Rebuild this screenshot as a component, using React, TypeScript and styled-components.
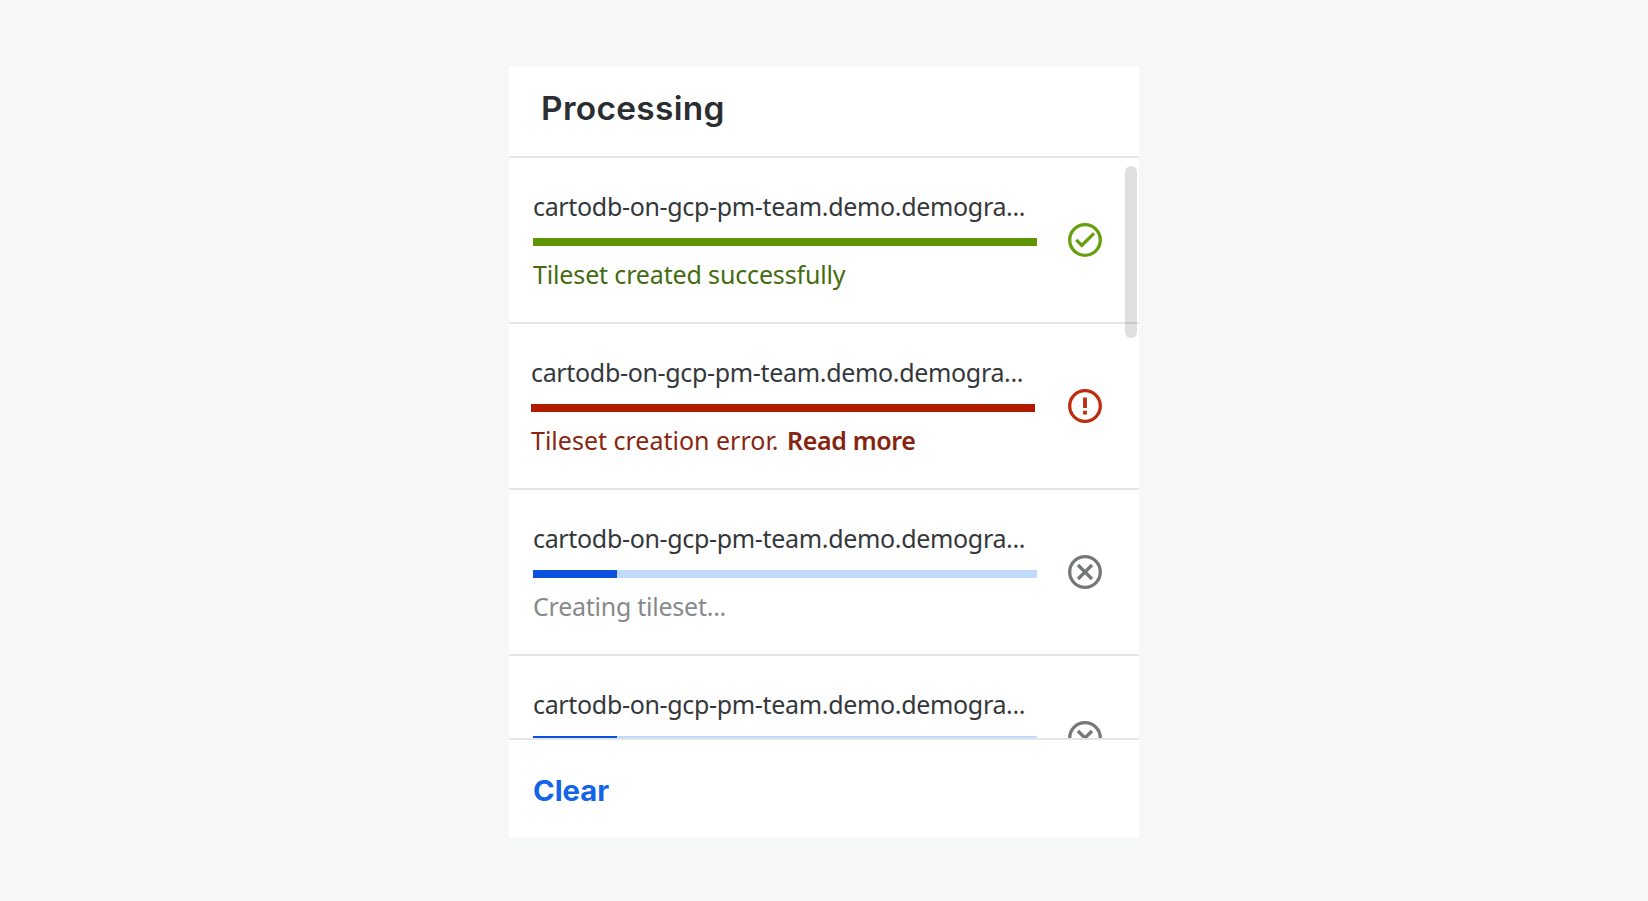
import React from "react";
import styled, { createGlobalStyle } from "styled-components";

const GlobalStyle = createGlobalStyle`
  *, *::before, *::after { box-sizing: border-box; }
  body { margin: 0; background: #f5f8f7; }
`;

type Status = "success" | "error" | "running";

const palette = {
  success: { bar: "#5f9404", track: "#5f9404", text: "#456b10", icon: "#669f0e" },
  error: { bar: "#b21a02", track: "#b21a02", text: "#882612", icon: "#be2d10" },
  running: { bar: "#0b51df", track: "#bfdafa", text: "#878a8b", icon: "#747879" },
};

const messageSpacing = { success: "-0.15px", error: "0", running: "-0.25px" };

const Page = styled.main`
  display: flex;
  justify-content: center;
  align-items: flex-start;
  height: 901px;
  padding-top: 66px;
  overflow: hidden;
`;

const Card = styled.section`
  display: flex;
  flex-direction: column;
  width: 630px;
  height: 772px;
  background: #fff;
`;

const Header = styled.header`
  flex: none;
  height: 92px;
  padding: 23px 32px 0;
  border-bottom: 2px solid #e4e6e6;
`;

const Title = styled.h1`
  width: max-content;
  margin: 0;
  color: #2a2e31;
  font: 600 32px/40px Inter, sans-serif;
  letter-spacing: 0.3px;
  transform: scaleX(1.045);
  transform-origin: left;
`;

const Viewport = styled.div`
  position: relative;
  flex: none;
  height: 580px;
  overflow: hidden;
`;

const Row = styled.article<{ $shift: number }>`
  display: flex;
  justify-content: space-between;
  height: 166px;
  padding: 30px 36px 0 ${(p) => 24 - p.$shift}px;
  border-bottom: 2px solid #e4e6e6;
`;

const Details = styled.div`
  display: flex;
  flex-direction: column;
  width: 504px;
`;

const Name = styled.div`
  width: max-content;
  height: 36px;
  color: #34383b;
  font: 400 25px/36px "Noto Sans", sans-serif;
  letter-spacing: -0.33px;
  white-space: nowrap;
`;

const Track = styled.div<{ $status: Status }>`
  height: 8px;
  margin-top: 14px;
  background: ${(p) => palette[p.$status].track};
`;

const Fill = styled.div<{ $status: Status }>`
  height: 100%;
  background: ${(p) => palette[p.$status].bar};
`;

const Message = styled.div<{ $status: Status }>`
  width: max-content;
  margin-top: 10px;
  color: ${(p) => palette[p.$status].text};
  font: 400 25px/36px "Noto Sans", sans-serif;
  letter-spacing: ${(p) => messageSpacing[p.$status]};
  white-space: nowrap;
`;

const ReadMore = styled.strong`
  margin-left: 2px;
  color: #862410;
  font-weight: 600;
  letter-spacing: -0.35px;
`;

const Icon = styled.svg<{ $status: Status }>`
  flex: none;
  width: 36px;
  height: 36px;
  margin-top: 34px;
  fill: none;
  stroke: ${(p) => palette[p.$status].icon};
  stroke-width: 3.3;
`;

const ScrollThumb = styled.div`
  position: absolute;
  top: 8px;
  right: 2px;
  width: 12px;
  height: 172px;
  border-radius: 6px;
  background: rgba(44, 54, 50, 0.155);
`;

const Footer = styled.footer`
  flex: 1;
  padding: 31px 24px 0;
  border-top: 2px solid #e4e6e6;
`;

const ClearButton = styled.button`
  padding: 0;
  border: 0;
  background: none;
  color: #1264e8;
  font: 700 28px/40px Inter, sans-serif;
  transform: scaleX(1.045);
  transform-origin: left;
`;

function StatusIcon({ status }: { status: Status }) {
  return (
    <Icon $status={status} viewBox="0 0 36 36">
      <circle cx="18" cy="18" r="15.3" />
      {status === "success" && <path d="M9.3 17.9 14.8 23.4 27 11.4" />}
      {status === "error" && <path strokeWidth="3.8" d="M18 9.4v10.6M18 22.8v3.7" />}
      {status === "running" && <path d="m11 11 14 14M25 11 11 25" />}
    </Icon>
  );
}

const name = "cartodb-on-gcp-pm-team.demo.demogra...";

const jobs: { status: Status; progress: number; message?: React.ReactNode }[] = [
  { status: "success", progress: 504, message: "Tileset created successfully" },
  { status: "error", progress: 504, message: <>Tileset creation error. <ReadMore>Read more</ReadMore></> },
  { status: "running", progress: 84, message: "Creating tileset..." },
  { status: "running", progress: 84 },
];

export default function App() {
  return (
    <>
      <GlobalStyle />
      <Page>
        <Card>
          <Header>
            <Title>Processing</Title>
          </Header>
          <Viewport>
            {jobs.map((job, i) => (
              <Row key={i} $shift={job.status === "error" ? 2 : 0}>
                <Details>
                  <Name>{name}</Name>
                  <Track $status={job.status}>
                    <Fill $status={job.status} style={{ width: job.progress }} />
                  </Track>
                  {job.message && <Message $status={job.status}>{job.message}</Message>}
                </Details>
                <StatusIcon status={job.status} />
              </Row>
            ))}
            <ScrollThumb />
          </Viewport>
          <Footer>
            <ClearButton>Clear</ClearButton>
          </Footer>
        </Card>
      </Page>
    </>
  );
}
